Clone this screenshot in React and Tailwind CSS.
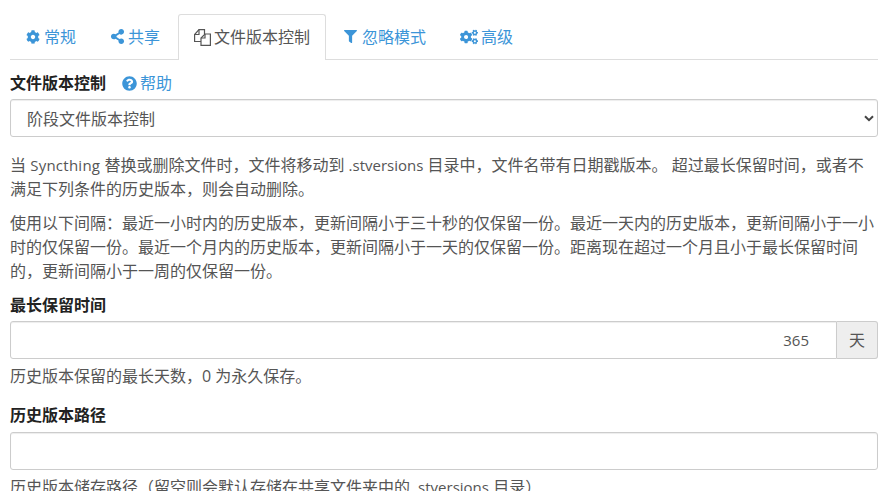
import React from "react";
import { FaCog, FaShareAlt, FaFilter, FaCogs, FaQuestionCircle } from "react-icons/fa";

function FilesIcon() {
  return (
    <svg width="17" height="17" viewBox="0 0 17 17" fill="none" stroke="currentColor" strokeWidth="1.2">
      <path d="M7 12.5H0.6V5.5L5 0.6H10.5V5" />
      <path d="M5 0.6V5.5H0.6" />
      <path d="M7 16.4V9L11 5H16.4V16.4Z" />
      <path d="M11 5V9H7" />
    </svg>
  );
}

function Tab({ icon, iconBox, label, active, className = "" }) {
  return (
    <div
      className={
        "flex items-center h-[46px] px-[15px] text-[16px] border border-b-0 rounded-t-[3px] " +
        (active ? "bg-white border-[#ddd] text-[#555] -mb-px pb-[1px] " : "border-transparent text-[#3c95d8] ") +
        className
      }
    >
      <span className={"flex items-center " + iconBox}>{icon}</span>
      <span>{label}</span>
    </div>
  );
}

function Label({ children, className = "" }) {
  return <div className={"text-[16px] font-bold leading-[24px] text-[#222] " + className}>{children}</div>;
}

function Latin({ children }) {
  return <span className="text-[15px]">{children}</span>;
}

export default function App() {
  return (
    <div className="h-[491px] w-[885px] overflow-hidden bg-white px-[10px] text-[16px] text-[#555] font-['Open_Sans','Noto_Sans_CJK_SC',sans-serif]">
      <div className="w-[868px]">
        <div className="flex h-[60px] items-end border-b border-[#ddd]">
          <Tab icon={<FaCog className="text-[14px]" />} iconBox="w-[18px]" label="常规" />
          <Tab icon={<FaShareAlt className="text-[15px]" />} iconBox="w-[18px]" label="共享" className="ml-[2px]" />
          <Tab icon={<FilesIcon />} iconBox="w-[20px]" label="文件版本控制" active className="ml-[2px]" />
          <Tab icon={<FaFilter className="text-[13px]" />} iconBox="w-[18px]" label="忽略模式" className="ml-[2px]" />
          <Tab icon={<FaCogs className="text-[18px]" />} iconBox="w-[21px]" label="高级" className="ml-[2px]" />
        </div>

        <div className="mt-[11px] flex h-[24px] items-center">
          <Label>文件版本控制</Label>
          <span className="ml-[16px] flex items-center gap-[3px] text-[16px] text-[#3c95d8]">
            <FaQuestionCircle className="text-[15px]" />
            帮助
          </span>
        </div>

        <div className="relative mt-[4px]">
          <select className="block h-[38px] w-full appearance-none rounded-[3px] border border-[#ccc] bg-white px-[16px] pt-[2px] text-[16px] text-[#555] shadow-[inset_0_1px_1px_rgba(0,0,0,0.075)]">
            <option>阶段文件版本控制</option>
          </select>
          <svg className="absolute right-[4px] top-[16px]" width="10" height="7" viewBox="0 0 10 7">
            <path d="M1 1.2 L5 5.2 L9 1.2" fill="none" stroke="#444" strokeWidth="2" />
          </svg>
        </div>

        <p className="mt-[16px] leading-[24px]">
          当 <span className="text-[15px] tracking-[0.25px]">Syncthing</span> 替换或删除文件时，文件将移动到 <Latin>.stversions</Latin> 目录中，文件名带有日期戳版本。 超过最长保留时间，或者不满足下列条件的历史版本，则会自动删除。
        </p>
        <p className="mt-[10px] leading-[24px]">
          使用以下间隔：最近一小时内的历史版本，更新间隔小于三十秒的仅保留一份。最近一天内的历史版本，更新间隔小于一小时的仅保留一份。最近一个月内的历史版本，更新间隔小于一天的仅保留一份。距离现在超过一个月且小于最长保留时间的，更新间隔小于一周的仅保留一份。
        </p>

        <Label className="mt-[10px]">最长保留时间</Label>
        <div className="mt-[4px] flex h-[38px]">
          <div className="flex flex-1 items-center justify-end rounded-l-[3px] border border-[#ccc] bg-white pr-[27px] text-[15px] shadow-[inset_0_1px_1px_rgba(0,0,0,0.075)]">
            365
          </div>
          <div className="flex w-[41px] items-center justify-center rounded-r-[3px] border border-l-0 border-[#ccc] bg-[#eee]">
            天
          </div>
        </div>
        <p className="mt-[5px] leading-[24px]">历史版本保留的最长天数，0 为永久保存。</p>

        <Label className="mt-[15px]">历史版本路径</Label>
        <div className="mt-[5px] h-[38px] rounded-[3px] border border-[#ccc] bg-white shadow-[inset_0_1px_1px_rgba(0,0,0,0.075)]" />
        <p className="mt-[5px] leading-[24px]">历史版本储存路径（留空则会默认存储在共享文件夹中的 <Latin>.stversions</Latin> 目录）</p>
      </div>
    </div>
  );
}
